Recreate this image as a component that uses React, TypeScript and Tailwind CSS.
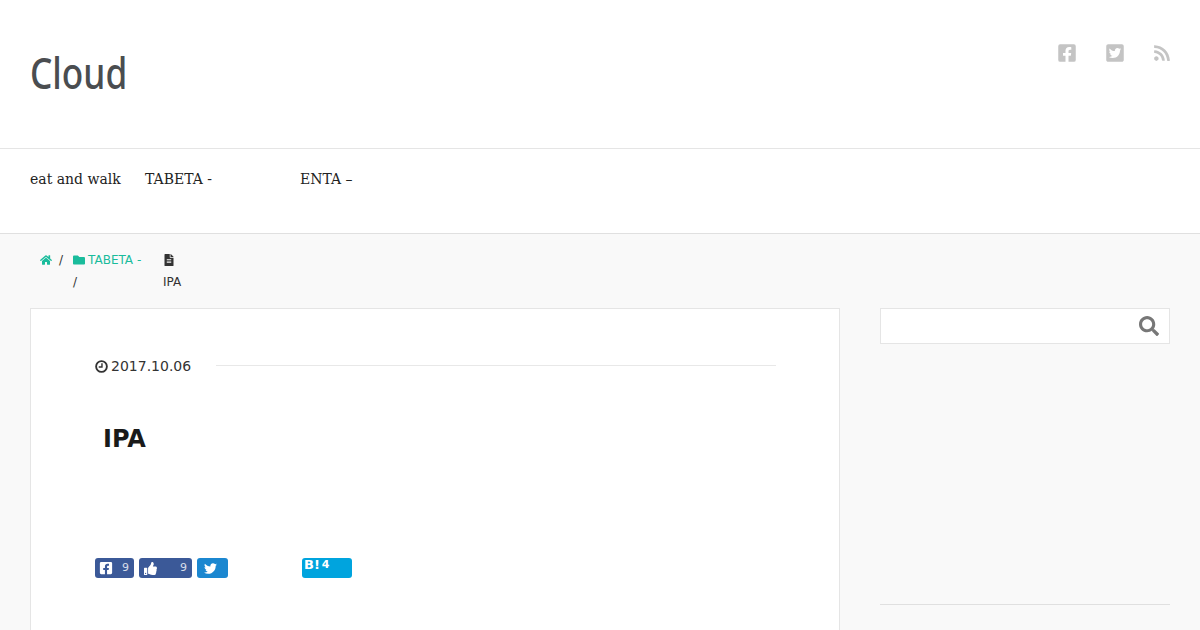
import { FaFacebookSquare, FaFileAlt, FaFolder, FaHome, FaRss, FaSearch, FaThumbsUp, FaTwitter, FaTwitterSquare } from 'react-icons/fa'

const dejavu = "font-['DejaVu_Sans',sans-serif]"

export default function App() {
  return (
    <div className={`h-[630px] w-[1200px] overflow-hidden bg-[#f9f9f9] ${dejavu}`}>
      <header className="flex h-[149px] justify-between border-b border-[#e5e5e5] bg-white pl-[30px] pr-[28px]">
        <h1 className="mt-[44px] h-[56px] w-[96px] origin-left scale-x-[0.8] font-['Noto_Sans',sans-serif] text-[44px] leading-[56px] font-medium whitespace-nowrap text-[#4a4d50]">Cloud</h1>
        <div className="mt-[43px] flex h-[20px] gap-[28px] text-[#c4c4c4]">
          <FaFacebookSquare className="size-[20px]" />
          <FaTwitterSquare className="size-[20px]" />
          <FaRss className="mt-px mr-px size-[18px]" />
        </div>
      </header>

      <nav className="flex h-[85px] items-start border-b border-[#e0e0e0] bg-white pl-[30px] pt-[21px] font-['DejaVu_Serif',serif] text-sm leading-[18px] text-[#222]">
        <span className="w-[115px]">eat and walk</span>
        <span className="w-[155px]">TABETA -</span>
        <span>ENTA –</span>
      </nav>

      <div className="flex h-[74px] items-start pl-[40px] pt-[15px] text-xs leading-[22px] text-[#333]">
        <FaHome className="mt-[5px] size-[12px] text-[#1abc9c]" />
        <span className="ml-[7px]">/</span>
        <div className="ml-[10px] w-[90px]">
          <div className="flex items-center gap-[3px] text-[#1abc9c]"><FaFolder className="size-[12px]" />TABETA -</div>
          <div>/</div>
        </div>
        <div>
          <FaFileAlt className="mt-[5px] mb-[5px] size-[12px] text-[#333]" />
          <div>IPA</div>
        </div>
      </div>

      <div className="flex items-start gap-[40px] pl-[30px]">
        <main className="h-[400px] w-[810px] border border-[#e5e5e5] bg-white pl-[64px] pt-[48px]">
          <div className="flex w-[681px] items-center gap-[25px] text-sm leading-[18px] text-[#333]">
            <span className="flex items-center gap-[3px]">
              <svg viewBox="0 0 14 14" className="size-[13px]" fill="none" stroke="currentColor" strokeWidth="2">
                <circle cx="7" cy="7" r="5.8" />
                <path d="M7.5 3.5V7.5H4" strokeWidth="1.5" />
              </svg>
              2017.10.06
            </span>
            <span className="mb-[2px] h-px flex-1 bg-[#e8e8e8]" />
          </div>
          <h2 className="mt-[48px] pl-[8px] text-2xl leading-[32px] font-bold text-[#1a1a1a]">IPA</h2>
          <div className="mt-[103px] flex text-[11px] leading-[20px] text-white">
            <span className="flex h-[20px] w-[39px] items-center justify-between rounded-[3px] bg-[#3b5998] pl-[4px] pr-[5px]"><FaFacebookSquare className="size-[14px]" /><span className="opacity-80">9</span></span>
            <span className="ml-[5px] flex h-[20px] w-[53px] items-center justify-between rounded-[3px] bg-[#3b5998] pl-[5px] pr-[5px]"><FaThumbsUp className="size-[13px]" /><span className="opacity-80">9</span></span>
            <span className="ml-[5px] flex h-[20px] w-[31px] items-center rounded-[3px] bg-[#1b87d0] px-[7px]"><FaTwitter className="size-[13px]" /></span>
            <span className="ml-[74px] flex h-[20px] w-[50px] items-start gap-[2px] rounded-[3px] bg-[#00a4de] pl-[2px] font-bold leading-[14px]"><span className="text-[13px]">B!</span><span>4</span></span>
          </div>
        </main>
        <aside className="w-[290px]">
          <div className="flex h-[36px] items-center justify-end border border-[#e5e5e5] bg-white pr-[10px]">
            <FaSearch className="size-[20px] text-[#777]" />
          </div>
          <div className="mt-[260px] h-px bg-[#e0e0e0]" />
        </aside>
      </div>
    </div>
  )
}
